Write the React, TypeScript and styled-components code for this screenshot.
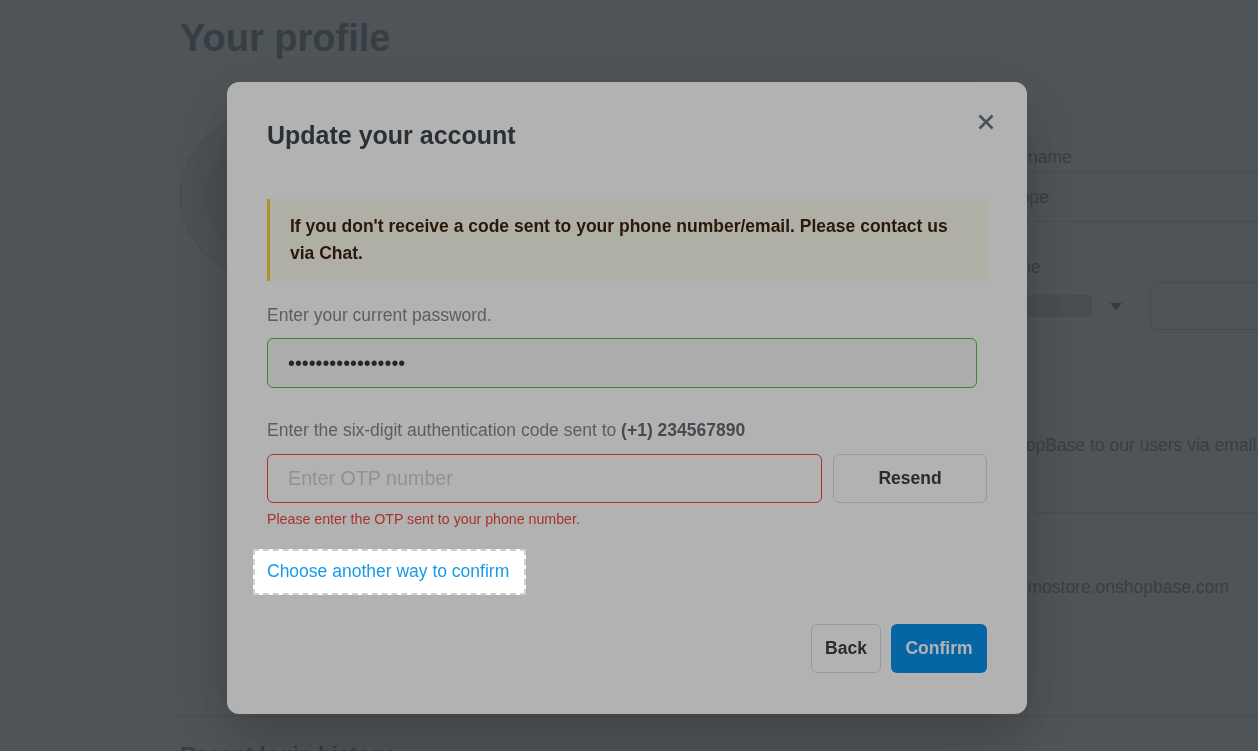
import React from "react";
import styled, { createGlobalStyle } from "styled-components";

const GlobalStyle = createGlobalStyle`
  html, body {
    margin: 0;
    padding: 0;
  }
  body {
    font-family: "Liberation Sans", Arial, Helvetica, sans-serif;
    background: #ffffff;
    overflow: hidden;
  }
  * {
    box-sizing: border-box;
  }
`;

/* ---------- profile page (behind the modal) ---------- */

const Page = styled.div`
  width: 1258px;
  height: 751px;
  overflow: hidden;
  padding: 16px 0 0 180px;
  background: #ffffff;
  color: #a9b0b4;
`;

const PageTitle = styled.h1`
  margin: 0;
  font-size: 38px;
  line-height: 44px;
  font-weight: 700;
  color: #a4abaf;
`;

const ProfileRow = styled.div`
  display: flex;
  height: 601px;
  margin-top: 55px;
`;

const AvatarCol = styled.div`
  width: 420px;
  flex-shrink: 0;
`;

const Avatar = styled.div`
  width: 162px;
  height: 162px;
  border-radius: 50%;
  border: 1px solid #d3d9dc;
  background: #eef1f3;
  display: flex;
  align-items: center;
  justify-content: center;
  &::after {
    content: "";
    width: 112px;
    height: 112px;
    border-radius: 50%;
    background: #e8ebee;
  }
`;

const FormCol = styled.div`
  flex: 1;
  padding-top: 30px;
  min-width: 0;
`;

const FieldGrid = styled.div<{ $top?: number }>`
  display: grid;
  grid-template-columns: 380px 380px;
  column-gap: 10px;
  margin-top: ${(p) => p.$top ?? 0}px;
`;

const Field = styled.div`
  display: flex;
  flex-direction: column;
`;

const FieldLabel = styled.label`
  font-size: 17.5px;
  line-height: 24px;
  color: #a9b0b4;
  margin-bottom: 3px;
`;

const TextBox = styled.div<{ $h?: number; $grow?: boolean }>`
  height: ${(p) => p.$h ?? 50}px;
  flex: ${(p) => (p.$grow ? "1" : "none")};
  border: 1px solid #d8e2dc;
  border-radius: 8px;
  padding: 0 16px;
  display: flex;
  align-items: center;
  font-size: 17.5px;
  color: #a9b0b4;
`;

const PhoneRow = styled.div`
  display: flex;
  gap: 10px;
  height: 48px;
`;

const CountrySelect = styled.div`
  width: 150px;
  display: flex;
  align-items: center;
  gap: 10px;
  padding-left: 20px;
`;

const CountryChip = styled.div`
  width: 82px;
  height: 22px;
  border-radius: 2px;
  background: #e2e6e9;
`;

const Caret = styled.span`
  width: 0;
  height: 0;
  margin-left: 8px;
  border-left: 6px solid transparent;
  border-right: 6px solid transparent;
  border-top: 7px solid #9ea5aa;
`;

const Consent = styled.p`
  margin: 103px 0 0 0;
  font-size: 17.5px;
  line-height: 24px;
  white-space: nowrap;
  color: #a9b0b4;
`;

const Rule = styled.div<{ $top: number }>`
  height: 1px;
  background: #e3e9e8;
  margin-top: ${(p) => p.$top}px;
`;

const Domain = styled.div`
  margin: 62px 0 0 408px;
  font-size: 17.5px;
  line-height: 24px;
  color: #a9b0b4;
`;

const PageRule = styled.div`
  height: 1px;
  background: #e3e9e8;
  margin-left: -10px;
`;

const SectionTitle = styled.h2`
  margin: 24px 0 0 0;
  font-size: 22px;
  line-height: 28px;
  font-weight: 700;
  color: #a4abaf;
`;

/* ---------- modal ---------- */

const Backdrop = styled.div`
  position: fixed;
  inset: 0;
  z-index: 10;
  background: rgba(28, 38, 46, 0.62);
  display: flex;
  justify-content: center;
  align-items: flex-start;
  padding: 82px 4px 0 0;
`;

const Modal = styled.div`
  width: 800px;
  background: #ffffff;
  border-radius: 12px;
  padding: 38px 40px 41px;
  display: flex;
  flex-direction: column;
  box-shadow: 0 24px 64px rgba(0, 0, 0, 0.22);
`;

const ModalHeader = styled.div`
  display: flex;
  justify-content: space-between;
  align-items: flex-start;
  height: 30px;
`;

const ModalTitle = styled.h3`
  margin: 0;
  font-size: 25px;
  line-height: 30px;
  font-weight: 700;
  color: #3e454c;
`;

const CloseButton = styled.button`
  width: 18px;
  height: 18px;
  padding: 0;
  margin: -7px -8px 0 0;
  border: none;
  background: transparent;
  color: #6b757e;
  cursor: pointer;
  display: flex;
  svg {
    display: block;
  }
`;

const Notice = styled.div`
  margin-top: 49px;
  padding: 14px 20px;
  border-left: 3px solid #ffd02e;
  background: #fdfbee;
  font-size: 17.5px;
  line-height: 27px;
  font-weight: 700;
  color: #3d2510;
`;

const Label = styled.p<{ $top: number }>`
  margin: ${(p) => p.$top}px 0 0 0;
  font-size: 17.5px;
  line-height: 26px;
  color: #80898f;
  b {
    color: #646c73;
  }
`;

const PasswordInput = styled.input`
  margin-top: 10px;
  width: 710px;
  height: 50px;
  padding: 0 20px;
  border: 1px solid #4fc53a;
  border-radius: 6px;
  background: #f5f8f6;
  font-family: inherit;
  font-size: 19.7px;
  color: #393939;
  outline: none;
`;

const OtpRow = styled.div`
  margin-top: 11px;
  display: flex;
  gap: 11px;
  height: 49px;
`;

const OtpInput = styled.input`
  flex: 1;
  height: 100%;
  padding: 0 20px;
  border: 1px solid #f04a3c;
  border-radius: 6px;
  background: #ffffff;
  font-family: inherit;
  font-size: 19.7px;
  color: #393939;
  outline: none;
  &::placeholder {
    color: #cdd0d3;
  }
`;

const GhostButton = styled.button<{ $w: number }>`
  width: ${(p) => p.$w}px;
  height: 49px;
  border: 1px solid #d9dcdf;
  border-radius: 6px;
  background: #ffffff;
  font-family: inherit;
  font-size: 17.5px;
  font-weight: 700;
  color: #393f45;
  cursor: pointer;
`;

const PrimaryButton = styled.button`
  width: 96px;
  height: 49px;
  border: none;
  border-radius: 6px;
  background: #0a91ec;
  font-family: inherit;
  font-size: 17.5px;
  font-weight: 700;
  color: #ffffff;
  cursor: pointer;
`;

const ErrorText = styled.p`
  margin: 7px 0 0 0;
  font-size: 14.2px;
  line-height: 18px;
  color: #f04a3c;
`;

/* the tour spotlight: everything but this box is dimmed */
const Spotlight = styled.div`
  position: relative;
  z-index: 1;
  align-self: flex-start;
  margin: 21px 0 0 -14px;
  padding: 9px 15px 11px 12px;
  border: 2px dashed #cfcfcf;
  background: #ffffff;
  box-shadow: 0 0 0 3000px rgba(0, 0, 0, 0.3);
`;

const SwitchLink = styled.a`
  display: block;
  font-size: 17.5px;
  line-height: 22px;
  color: #179be6;
  text-decoration: none;
  white-space: nowrap;
`;

const ModalFooter = styled.div`
  margin-top: 29px;
  display: flex;
  justify-content: flex-end;
  gap: 10px;
`;

function CloseIcon() {
  return (
    <svg width="18" height="18" viewBox="0 0 18 18" fill="none">
      <path
        d="M2.5 2.5 L15.5 15.5 M15.5 2.5 L2.5 15.5"
        stroke="currentColor"
        strokeWidth="2.7"
      />
    </svg>
  );
}

export default function App() {
  return (
    <>
      <GlobalStyle />
      <Page>
        <PageTitle>Your profile</PageTitle>
        <ProfileRow>
          <AvatarCol>
            <Avatar />
          </AvatarCol>
          <FormCol>
            <FieldGrid>
              <Field>
                <FieldLabel>First name</FieldLabel>
                <TextBox>John</TextBox>
              </Field>
              <Field>
                <FieldLabel>Last name</FieldLabel>
                <TextBox>Hope</TextBox>
              </Field>
            </FieldGrid>
            <FieldGrid $top={33}>
              <Field>
                <FieldLabel>Email</FieldLabel>
                <TextBox $h={48}>john.hope@shopbase.com</TextBox>
              </Field>
              <Field>
                <FieldLabel>Phone</FieldLabel>
                <PhoneRow>
                  <CountrySelect>
                    <CountryChip />
                    <Caret />
                  </CountrySelect>
                  <TextBox $h={48} $grow />
                </PhoneRow>
              </Field>
            </FieldGrid>
            <Consent>
              I agree to receive the top news and offers sent from ShopBase to our users via email.
            </Consent>
            <Rule $top={55} />
            <Domain>demostore.onshopbase.com</Domain>
          </FormCol>
        </ProfileRow>
        <PageRule />
        <SectionTitle>Recent login history</SectionTitle>
      </Page>

      <Backdrop>
        <Modal>
          <ModalHeader>
            <ModalTitle>Update your account</ModalTitle>
            <CloseButton aria-label="Close">
              <CloseIcon />
            </CloseButton>
          </ModalHeader>

          <Notice>
            If you don't receive a code sent to your phone number/email. Please
            contact us via Chat.
          </Notice>

          <Label $top={21}>Enter your current password.</Label>
          <PasswordInput type="password" defaultValue="myoldpassword1234" readOnly />

          <Label $top={29}>
            Enter the six-digit authentication code sent to <b>(+1) 234567890</b>
          </Label>
          <OtpRow>
            <OtpInput placeholder="Enter OTP number" />
            <GhostButton $w={154}>Resend</GhostButton>
          </OtpRow>
          <ErrorText>Please enter the OTP sent to your phone number.</ErrorText>

          <Spotlight>
            <SwitchLink href="#">Choose another way to confirm</SwitchLink>
          </Spotlight>

          <ModalFooter>
            <GhostButton $w={70}>Back</GhostButton>
            <PrimaryButton>Confirm</PrimaryButton>
          </ModalFooter>
        </Modal>
      </Backdrop>
    </>
  );
}
